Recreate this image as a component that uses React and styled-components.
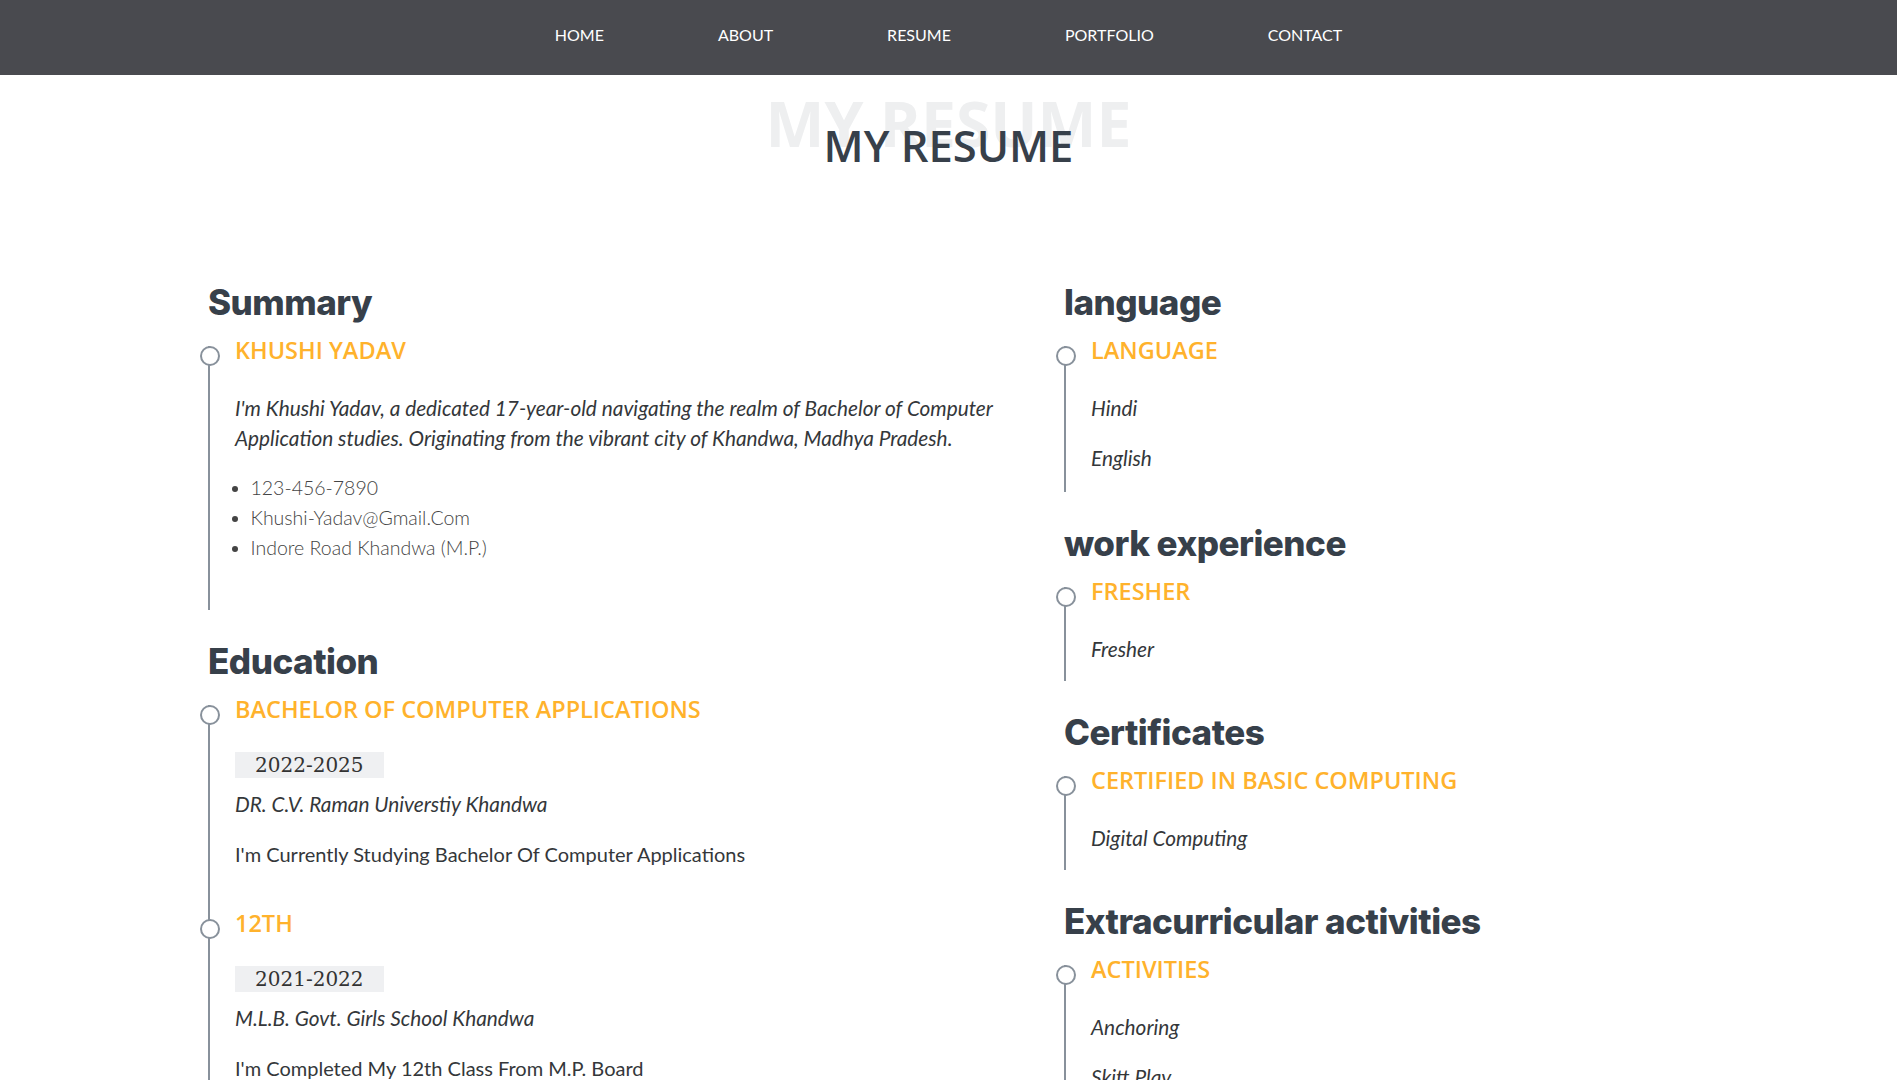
import React from 'react';
import styled, { createGlobalStyle } from 'styled-components';

const GlobalStyle = createGlobalStyle`
    * {
        box-sizing: border-box;
    }

    body {
        margin: 0;
        background: #fff;
        font-family: 'Lato', 'Open Sans', sans-serif;
        color: #333;
    }
`;

const Nav = styled.nav`
    height: 75px;
    background-color: #494a4f;
    display: flex;
    justify-content: center;
    padding-top: 25px;
`;

const NavList = styled.ul`
    display: flex;
    gap: 114px;
    list-style: none;
    margin: 0;
    padding: 0;
`;

const NavLink = styled.a`
    font-family: 'Lato', sans-serif;
    font-size: 16px;
    line-height: 20px;
    color: #fff;
    text-transform: uppercase;
    text-decoration: none;
`;

const SectionTitle = styled.div`
    position: relative;
    text-align: center;
    padding: 46px 0 80px;
`;

const BgTitle = styled.span`
    position: absolute;
    top: 17px;
    left: 0;
    right: 0;
    font-family: 'Open Sans', sans-serif;
    font-size: 62.5px;
    line-height: 1;
    font-weight: 700;
    color: #eeeff0;
    text-transform: uppercase;
    z-index: 1;
`;

const Title = styled.h2`
    position: relative;
    z-index: 2;
    margin: 0;
    font-family: 'Open Sans', sans-serif;
    font-size: 43.5px;
    line-height: 50px;
    font-weight: 600;
    color: #37404a;
    text-transform: uppercase;
`;

const Row = styled.div`
    display: flex;
    padding-left: 196px;
`;

const Column = styled.div`
    flex: ${(p) => (p.$grow ? '1 1 auto' : '0 0 856px')};
    min-width: 0;
    padding: 0 12px;
`;

const Heading = styled.h3`
    margin: 30px 0 23px;
    font-family: 'Inter', sans-serif;
    font-size: 35px;
    line-height: 42px;
    font-weight: 800;
    color: #37404a;
    letter-spacing: -0.5px;
`;

const Item = styled.div`
    display: flow-root;
    position: relative;
    border-left: 2px solid #88919b;
    padding: 0 0 ${(p) => p.$pb || 17}px 25px;

    &::before {
        content: '';
        position: absolute;
        left: -10px;
        top: 0;
        width: 16px;
        height: 16px;
        border-radius: 50%;
        background: #fff;
        border: 2px solid #88919b;
    }
`;

const ItemTitle = styled.h4`
    margin: -10px 0 29px;
    font-family: 'Open Sans', sans-serif;
    font-size: 23.5px;
    line-height: 28px;
    font-weight: 600;
    color: #ffb22c;
    text-transform: uppercase;
`;

const Badge = styled.h5`
    display: inline-block;
    margin: 0 0 11px;
    padding: 0 20px;
    height: 26px;
    line-height: 26px;
    background: #eff0f2;
    font-family: 'DejaVu Serif', serif;
    font-size: 20px;
    font-weight: 400;
    color: #333;
`;

const Text = styled.p`
    margin: 0 0 20px;
    font-size: ${(p) => (p.$italic ? '20.8px' : '20px')};
    line-height: 30px;
    color: #34373a;
    font-style: ${(p) => (p.$italic ? 'italic' : 'normal')};

    &:last-child {
        margin-bottom: 0;
    }
`;

const List = styled.ul`
    margin: 0;
    padding-left: 15.5px;
`;

const ListItem = styled.li`
    font-size: 19.5px;
    line-height: 30px;
    font-weight: 300;
    color: #444;
`;

const navItems = ['Home', 'About', 'Resume', 'Portfolio', 'Contact'];

const education = [
    {
        title: 'Bachelor of Computer Applications',
        years: '2022-2025',
        place: 'DR. C.V. Raman Universtiy Khandwa',
        text: "I'm Currently Studying Bachelor Of Computer Applications",
    },
    {
        title: '12th',
        years: '2021-2022',
        place: 'M.L.B. Govt. Girls School Khandwa',
        text: "I'm Completed My 12th Class From M.P. Board",
    },
    {
        title: '10th',
        years: '2019-2020',
        place: 'M.L.B. Govt. Girls School Khandwa',
        text: "I'm Completed My 10th Class From M.P. Board",
    },
];

const sideBlocks = [
    { heading: 'language', title: 'Language', lines: ['Hindi', 'English'], pb: 19 },
    { heading: 'work experience', title: 'Fresher', lines: ['Fresher'] },
    { heading: 'Certificates', title: 'Certified in basic computing', lines: ['Digital Computing'] },
    { heading: 'Extracurricular activities', title: 'Activities', lines: ['Anchoring', 'Skitt Play', 'Dancing'] },
];

const App = () => {
    return (
        <>
            <GlobalStyle />
            <Nav>
                <NavList>
                    {navItems.map((item) => (
                        <li key={item}>
                            <NavLink href={`#${item.toLowerCase()}`}>{item}</NavLink>
                        </li>
                    ))}
                </NavList>
            </Nav>

            <SectionTitle>
                <BgTitle>My Resume</BgTitle>
                <Title>My Resume</Title>
            </SectionTitle>

            <Row>
                <Column>
                    <Heading>Summary</Heading>
                    <Item $pb={47}>
                        <ItemTitle>Khushi Yadav</ItemTitle>
                        <Text $italic>
                            I'm Khushi Yadav, a dedicated 17-year-old navigating the realm of Bachelor of Computer
                            Application studies. Originating from the vibrant city of Khandwa, Madhya Pradesh.
                        </Text>
                        <List>
                            <ListItem>123-456-7890</ListItem>
                            <ListItem>Khushi-Yadav@Gmail.Com</ListItem>
                            <ListItem>Indore Road Khandwa (M.P.)</ListItem>
                        </List>
                    </Item>

                    <Heading>Education</Heading>
                    {education.map((edu) => (
                        <Item key={edu.title} $pb={50}>
                            <ItemTitle>{edu.title}</ItemTitle>
                            <Badge>{edu.years}</Badge>
                            <Text $italic>{edu.place}</Text>
                            <Text>{edu.text}</Text>
                        </Item>
                    ))}
                </Column>

                <Column $grow>
                    {sideBlocks.map((block) => (
                        <React.Fragment key={block.heading}>
                            <Heading>{block.heading}</Heading>
                            <Item $pb={block.pb}>
                                <ItemTitle>{block.title}</ItemTitle>
                                {block.lines.map((line) => (
                                    <Text $italic key={line}>{line}</Text>
                                ))}
                            </Item>
                        </React.Fragment>
                    ))}
                </Column>
            </Row>
        </>
    );
};

export default App;
